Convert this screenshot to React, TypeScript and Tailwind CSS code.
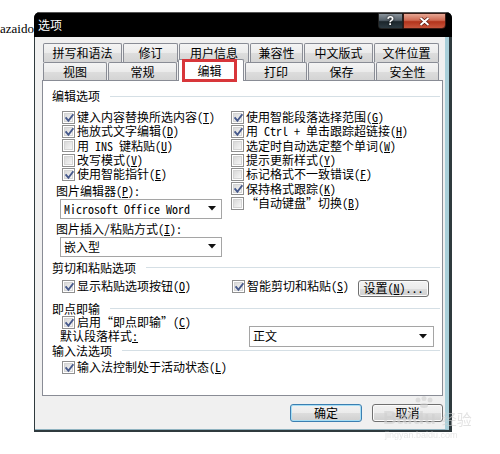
import React from "react";

const F = "font-['Noto_Sans_Mono_CJK_SC','Noto_Sans_CJK_SC',sans-serif]";

function M({ k }: { k: string }) {
  return (
    <>
      (<span className="underline underline-offset-[1px]">{k}</span>)
    </>
  );
}

function Check({ on }: { on: boolean }) {
  return (
    <span className="relative block w-[13px] h-[13px] shrink-0 border border-[#8f8f8f] bg-white p-[1px]">
      <span className="block w-full h-full border border-[#d4d4d4] bg-[linear-gradient(135deg,#d9d9d9,#f6f6f6)]"></span>
      {on && (
        <svg className="absolute left-[1px] top-[1px]" width="11" height="11" viewBox="0 0 11 11">
          <path d="M2.2 5.2 L4.4 7.8 L8.8 2" stroke="#46598c" strokeWidth="1.9" fill="none" strokeLinecap="square" />
        </svg>
      )}
    </span>
  );
}

function CB({ on, children, h = "h-[14.33px]" }: { on: boolean; children: React.ReactNode; h?: string }) {
  return (
    <div className={`flex items-center ${h}`}>
      <Check on={on} />
      <span className="ml-[2px] text-[12px] leading-[12px] whitespace-nowrap">{children}</span>
    </div>
  );
}

function Arrow() {
  return (
    <svg width="8" height="5" viewBox="0 0 8 5" className="shrink-0">
      <path d="M0 0 L8 0 L4 4.5 Z" fill="#111" />
    </svg>
  );
}

function Group({ label, h = "h-[14px]", mt }: { label: string; h?: string; mt: string }) {
  return (
    <div className={`flex items-center ${h} ${mt} pl-[9px] pr-[2px]`}>
      <span className="text-[12px] leading-[12px] whitespace-nowrap">{label}</span>
      <div className="flex-1 h-px bg-[#d5dfe5] ml-[10px]"></div>
    </div>
  );
}

function Tab({ w, label }: { w: string; label: string }) {
  return (
    <div
      className={`${w} h-full mr-[1px] border border-b-0 border-[#898c95] rounded-t-[2px] bg-[linear-gradient(#f4f4f4,#ebebeb_50%,#dddddd_51%,#d4d4d4)] flex items-center justify-center text-[12px] leading-[14px]`}
    >
      {label}
    </div>
  );
}

function Btn({ w, children, focus = false }: { w: string; children: React.ReactNode; focus?: boolean }) {
  return (
    <div
      className={`${w} h-full rounded-[3px] border ${
        focus ? "border-[#3c7fb1] shadow-[inset_0_0_0_1px_#a6def5]" : "border-[#707070] shadow-[inset_0_0_0_1px_#fbfbfb]"
      } bg-[linear-gradient(#f2f2f2,#ebebeb_50%,#dddddd_51%,#cfcfcf)] flex items-center justify-center text-[12px] leading-[14px]`}
    >
      {children}
    </div>
  );
}

export default function App() {
  return (
    <div lang="zh-CN" className={`relative w-[500px] h-[454px] bg-white overflow-hidden text-black ${F}`}>
      <div className="absolute left-0 top-[21px] font-['Liberation_Serif',serif] text-[13px] leading-[15px] text-black">
        azaido
      </div>

      {/* dialog window */}
      <div className="absolute left-[34px] top-[12px] w-[418px] h-[420px] rounded-t-[6px] bg-[#2f3a3e] flex flex-col overflow-hidden">
        {/* title bar */}
        <div className="h-[25px] bg-black flex items-start border-t border-[#555]">
          <span className="ml-[4px] mt-[5px] text-white text-[12px] leading-[14px]">选项</span>
          <div className="ml-auto mr-[6px] flex">
            <div className="w-[25px] h-[16px] rounded-bl-[3px] border border-[#222] bg-[linear-gradient(#8a949c,#56616a_45%,#1c262c_55%,#2c3a42)] flex items-center justify-center">
              <span className="text-white text-[12px] font-bold leading-none font-['Liberation_Sans',sans-serif] drop-shadow-[0_0_1px_#000]">?</span>
            </div>
            <div className="w-[43px] h-[16px] rounded-br-[4px] border border-[#3a1a14] bg-[linear-gradient(#e6a693,#cf6a53_45%,#b3341c_55%,#c8553c)] flex items-center justify-center">
              <svg width="11" height="9" viewBox="0 0 11 9">
                <path d="M1.5 1 L9.5 8 M9.5 1 L1.5 8" stroke="#5a1a10" strokeWidth="3.4" />
                <path d="M1.5 1 L9.5 8 M9.5 1 L1.5 8" stroke="#ffffff" strokeWidth="2" />
              </svg>
            </div>
          </div>
        </div>

        {/* body */}
        <div className="flex-1 ml-[1px] mr-[3px] mb-[2px] bg-[#f0f0f0] border-r-[4px] border-r-[#a9cfd9] border-b border-b-[#8fb2bf] flex flex-col pl-[7px] pr-[2px] pt-[6px]">
          {/* tabs */}
          <div className="flex h-[19px] ml-[1px]">
            <Tab w="w-[79px]" label="拼写和语法" />
            <Tab w="w-[55px]" label="修订" />
            <Tab w="w-[70px]" label="用户信息" />
            <Tab w="w-[53px]" label="兼容性" />
            <Tab w="w-[69px]" label="中文版式" />
            <Tab w="w-[65px]" label="文件位置" />
          </div>
          <div className="flex h-[18px] items-end ml-[1px]">
            <Tab w="w-[64px]" label="视图" />
            <Tab w="w-[69px]" label="常规" />
            <div className="relative z-10 w-[66px] h-[22px] mb-[-1px] mr-[1px] bg-white border border-b-0 border-[#898c95] rounded-t-[2px]">
              <div className="absolute left-[3px] right-[6px] top-[-1px] bottom-[-1px] border-[3px] border-[#d8363a] flex items-center justify-center text-[12px] leading-[14px]">
                编辑
              </div>
            </div>
            <Tab w="w-[62px]" label="打印" />
            <Tab w="w-[67px]" label="保存" />
            <Tab w="w-[63px]" label="安全性" />
          </div>

          {/* panel */}
          <div className="w-[401px] h-[316px] border border-[#898c95] bg-white flex flex-col">
            <Group label="编辑选项" mt="mt-[8px]" />
            <div className="flex mt-[7px] ml-[13px]">
              <div className="w-[175px] flex flex-col">
                <div className="pl-[6px] flex flex-col">
                  <CB on>键入内容替换所选内容<M k="T" /></CB>
                  <CB on>拖放式文字编辑<M k="D" /></CB>
                  <CB on={false}>用 INS 键粘贴<M k="U" /></CB>
                  <CB on={false}>改写模式<M k="V" /></CB>
                  <CB on>使用智能指针<M k="E" /></CB>
                </div>
                <div className="mt-[2px] h-[14px] text-[12px] leading-[14px]">
                  图片编辑器<M k="P" />:
                </div>
                <div className="mt-[1px] ml-[4px] w-[162px] h-[20px] border border-[#a5a5a5] bg-white flex items-center pl-[3px] pr-[5px]">
                  <span className="text-[12px] leading-[14px] whitespace-nowrap">Microsoft Office Word</span>
                  <span className="ml-auto"><Arrow /></span>
                </div>
                <div className="mt-[3px] h-[14px] text-[12px] leading-[14px]">
                  图片插入/粘贴方式<M k="I" />:
                </div>
                <div className="mt-[1px] ml-[4px] w-[162px] h-[20px] border border-[#a5a5a5] bg-white flex items-center pl-[3px] pr-[5px]">
                  <span className="text-[12px] leading-[14px]">嵌入型</span>
                  <span className="ml-auto"><Arrow /></span>
                </div>
              </div>
              <div className="flex flex-col">
                <CB on>使用智能段落选择范围<M k="G" /></CB>
                <CB on>用 Ctrl + 单击跟踪超链接<M k="H" /></CB>
                <CB on={false}>选定时自动选定整个单词<M k="W" /></CB>
                <CB on={false}>提示更新样式<M k="Y" /></CB>
                <CB on={false}>标记格式不一致错误<M k="F" /></CB>
                <CB on>保持格式跟踪<M k="K" /></CB>
                <CB on={false}>“自动键盘”切换<M k="B" /></CB>
              </div>
            </div>

            <Group label="剪切和粘贴选项" mt="mt-[4px]" />
            <div className="flex items-start h-[17px] mt-[5px] pl-[19px]">
              <div className="w-[170px]">
                <CB on h="h-[13px]">显示粘贴选项按钮<M k="O" /></CB>
              </div>
              <CB on h="h-[13px]">智能剪切和粘贴<M k="S" /></CB>
              <div className="ml-auto mr-[13px] h-[17px]">
                <Btn w="w-[71px]">设置<M k="N" />...</Btn>
              </div>
            </div>

            <Group label="即点即输" mt="mt-[5px]" />
            <div className="pl-[19px]">
              <CB on h="h-[13px]">启用“即点即输”<M k="C" /></CB>
            </div>
            <div className="flex items-center h-[21px] mt-[-3px] pl-[17px]">
              <div className="w-[189px] text-[12px] leading-[12px]">
                默认段落样式<span className="underline">:</span>
              </div>
              <div className="w-[185px] h-[21px] border border-[#a5a5a5] bg-white flex items-center pl-[3px] pr-[6px]">
                <span className="text-[12px] leading-[14px]">正文</span>
                <span className="ml-auto"><Arrow /></span>
              </div>
            </div>

            <Group label="输入法选项" h="h-[12px]" mt="mt-[-2px]" />
            <div className="pl-[19px] mt-[4px]">
              <CB on h="h-[13px]">输入法控制处于活动状态<M k="L" /></CB>
            </div>
          </div>

          {/* buttons */}
          <div className="mt-[8px] h-[18px] flex justify-end gap-[10px]">
            <Btn w="w-[72px]" focus>确定</Btn>
            <Btn w="w-[71px]">取消</Btn>
          </div>
        </div>
      </div>

      {/* watermark */}
      <div className="absolute left-[383px] top-[396px] opacity-60 pointer-events-none">
        <div className="flex items-end">
          <span className="text-[19px] leading-[20px] font-bold text-[#d0d0d0] font-['Liberation_Sans',sans-serif]">Bai</span>
          <div className="flex flex-col items-center">
            <svg width="22" height="12" viewBox="0 0 22 12">
              <circle cx="5" cy="4" r="2.5" fill="#d0d0d0" />
              <circle cx="11" cy="2.5" r="2.5" fill="#d0d0d0" />
              <circle cx="17" cy="4" r="2.5" fill="#d0d0d0" />
              <ellipse cx="11" cy="9.5" rx="4" ry="2.5" fill="#d0d0d0" />
            </svg>
            <span className="text-[19px] leading-[20px] font-bold text-[#d0d0d0] font-['Liberation_Sans',sans-serif]">du</span>
          </div>
          <span className="ml-[6px] text-[15px] leading-[18px] text-[#d0d0d0]">经验</span>
        </div>
        <div className="text-[9px] leading-[10px] text-[#d6d6d6] font-['Liberation_Sans',sans-serif] ml-[2px] mt-[2px]">
          jingyan.baidu.com
        </div>
      </div>
    </div>
  );
}
